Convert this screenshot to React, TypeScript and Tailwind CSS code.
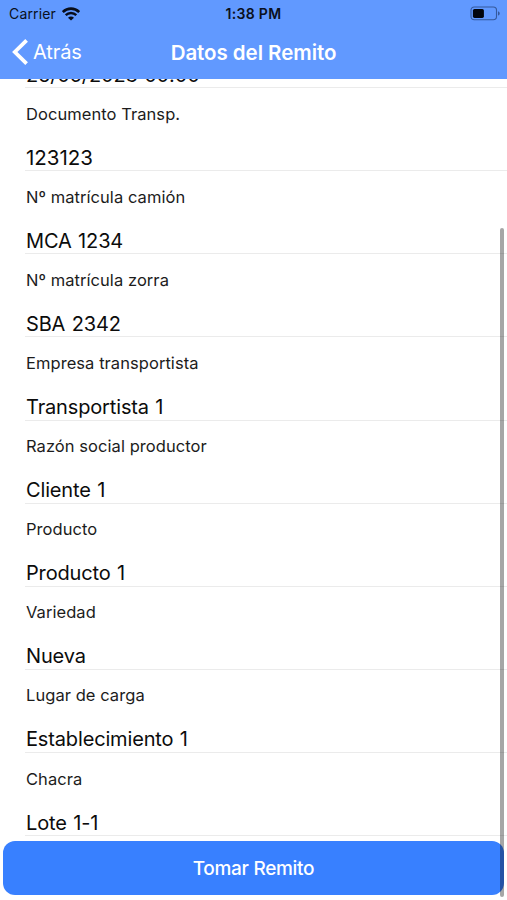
type Field = { label?: string; value: string; type?: string };

const fields: Field[] = [
  { value: "26/05/2023 00:00" },
  { label: "Documento Transp.", value: "123123", type: "text-[20.5px]" },
  { label: "Nº matrícula camión", value: "MCA 1234" },
  { label: "Nº matrícula zorra", value: "SBA 2342" },
  { label: "Empresa transportista", value: "Transportista 1" },
  { label: "Razón social productor", value: "Cliente 1" },
  { label: "Producto", value: "Producto 1" },
  { label: "Variedad", value: "Nueva" },
  { label: "Lugar de carga", value: "Establecimiento 1" },
  { label: "Chacra", value: "Lote 1-1" },
];

function WifiIcon() {
  return (
    <svg width="18" height="14" viewBox="0 0 18 14" fill="none" stroke="#080d1a">
      <path d="M0.8 5C5.4 0.6 12.6 0.6 17.2 5" strokeWidth="2.7" />
      <path d="M3.7 8.1C6.7 5.2 11.3 5.2 14.3 8.1" strokeWidth="2.4" />
      <path d="M9 13.6 6 10.7C7.8 9.1 10.2 9.1 12 10.7Z" fill="#080d1a" stroke="none" />
    </svg>
  );
}

function BatteryIcon() {
  return (
    <svg width="31" height="15" viewBox="0 0 31 15" fill="none">
      <rect x="1" y="1" width="25.5" height="12.8" rx="3.2" stroke="#35599c" strokeWidth="1.1" />
      <rect x="2.9" y="2.9" width="11" height="9" rx="1.6" fill="#02050c" />
      <path d="M28 5.2C30.3 6 30.3 8.8 28 9.6Z" fill="#35599c" />
    </svg>
  );
}

function Header() {
  return (
    <header className="h-[79px] shrink-0 bg-[#6199ff]">
      <div className="grid h-[27px] grid-cols-[1fr_auto_1fr] items-center px-[6px] text-[#0a1020]">
        <div className="flex items-center gap-[6px] pl-[3px] text-[14px]">
          <span className="tracking-[0.15px]">Carrier</span>
          <WifiIcon />
        </div>
        <span className="text-center text-[14px] font-semibold tracking-[0.3px]">1:38 PM</span>
        <div className="flex justify-end">
          <BatteryIcon />
        </div>
      </div>
      <div className="grid h-[50px] grid-cols-[1fr_auto_1fr] items-center px-3 text-white">
        <button className="flex items-center gap-[5px] text-[20px] tracking-[-0.1px]">
          <svg width="16" height="26" viewBox="0 0 16 26" fill="none" stroke="white" strokeWidth="3.8">
            <path d="M14.6 1.4 2.8 13 14.6 24.6" />
          </svg>
          <span>Atrás</span>
        </button>
        <h1 className="pt-[2px] text-[20.5px] font-semibold tracking-[-0.05px]">Datos del Remito</h1>
      </div>
    </header>
  );
}

function FieldRow({ label, value, type = "text-[20px] tracking-[-0.15px]" }: Field) {
  return (
    <div className="ml-[25px] flex h-[83.1px] shrink-0 flex-col justify-end border-b border-[#ebebeb] pl-px">
      {label && (
        <div className="text-[16.5px] leading-6 tracking-[0.06px] text-[#1c1c1c]">{label}</div>
      )}
      <div className={`mb-[-1.5px] mt-[18px] leading-7 text-[#0c0c0c] [word-spacing:1px] ${type}`}>{value}</div>
    </div>
  );
}

export default function App() {
  return (
    <div className="relative flex h-[900px] w-full flex-col overflow-hidden bg-white font-['Inter','Liberation_Sans',sans-serif]">
      <Header />
      <main className="flex h-[757px] shrink-0 flex-col justify-end overflow-hidden">
        {fields.map((field) => (
          <FieldRow key={field.value} {...field} />
        ))}
      </main>
      <footer className="pl-[3px] pr-[3px] pt-[5px]">
        <button className="h-[54px] w-full rounded-[12px] bg-[#3880ff] pt-[2px] text-[19px] font-medium tracking-[-0.3px] text-white">
          Tomar Remito
        </button>
      </footer>
      <div className="absolute right-[3px] top-[228px] h-[669px] w-1 rounded-full bg-black/35" />
    </div>
  );
}
